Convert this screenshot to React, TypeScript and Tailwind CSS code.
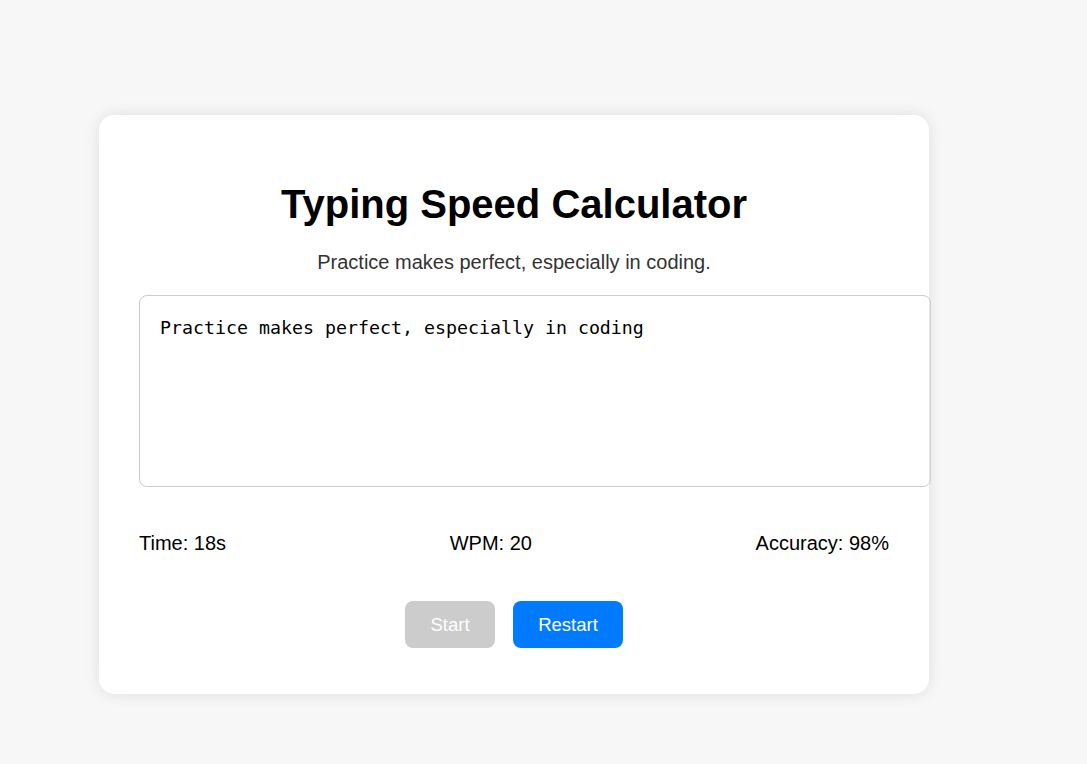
import React from "react";

export default function App() {
  return (
    <div
      className="min-h-[764px] w-full bg-[#f7f7f7] pt-[115px] pb-[70px]"
      style={{ fontFamily: '"Liberation Sans", Arial, sans-serif' }}
    >
      <div className="ml-[99px] w-[830px] rounded-[15px] bg-white px-[40px] pt-[40px] pb-[46px] shadow-[0_0_15px_rgba(0,0,0,0.1)]">
        <h1 className="mt-[26px] text-center text-[40px] font-bold leading-[46px] text-black">
          Typing Speed Calculator
        </h1>
        <p className="mt-[24px] text-center text-[20px] leading-[23px] text-[#333]">
          Practice makes perfect, especially in coding.
        </p>
        <textarea
          className="mt-[21px] box-content block h-[149px] w-[750px] resize-none rounded-[8px] border border-[#ccc] px-[20px] pt-[21px] pb-[20px] text-[18.27px] text-black outline-none"
          style={{ fontFamily: '"DejaVu Sans Mono", "Liberation Mono", monospace', lineHeight: "normal" }}
          defaultValue="Practice makes perfect, especially in coding"
        />
        <div className="mt-[45px] flex justify-between text-[20px] leading-[23px] text-black">
          <span>Time: 18s</span>
          <span>WPM: 20</span>
          <span>Accuracy: 98%</span>
        </div>
        <div className="mt-[46px] flex justify-center gap-[18px]">
          <button className="h-[47px] w-[90px] rounded-[8px] bg-[#ccc] text-[18.5px] text-white">
            Start
          </button>
          <button className="h-[47px] w-[110px] rounded-[8px] bg-[#007bff] text-[18.5px] text-white">
            Restart
          </button>
        </div>
      </div>
    </div>
  );
}
